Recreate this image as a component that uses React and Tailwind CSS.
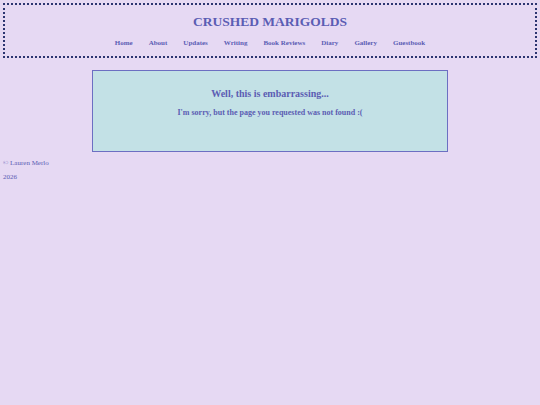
import React from "react";

const links = ["Home", "About", "Updates", "Writing", "Book Reviews", "Diary", "Gallery", "Guestbook"];

export default function App() {
	return (
		<div className="min-h-[405px] bg-[#e6d9f3] text-[#5b5db3] font-['Liberation_Serif',serif] pt-[3px]">
			<header className="mx-[3px] h-[55px] border-2 border-dotted border-[#2c3570] flex flex-col items-center">
				<h1 className="mt-[7px] text-[13.5px] font-bold leading-[20px]">CRUSHED MARIGOLDS</h1>
				<nav className="mt-[5px] flex gap-[16px] text-[7px] font-bold leading-[12px]">
					{links.map((l) => (
						<a key={l} href="#">{l}</a>
					))}
				</nav>
			</header>

			<main className="flex justify-center mt-[12px]">
				<div className="w-[356px] h-[82px] border border-[#6c6fc2] bg-[#c3e1e6] flex flex-col items-center">
					<h2 className="mt-[16px] text-[10px] font-bold leading-[14px]">Well, this is embarrassing...</h2>
					<p className="mt-[6px] text-[8px] font-bold leading-[12px]">I'm sorry, but the page you requested was not found :(</p>
				</div>
			</main>

			<footer className="mt-[6px] px-[3px] text-[7px] leading-[10px]">
				<p>© Lauren Merlo</p>
				<p className="mt-[4px]">2026</p>
			</footer>
		</div>
	);
}
